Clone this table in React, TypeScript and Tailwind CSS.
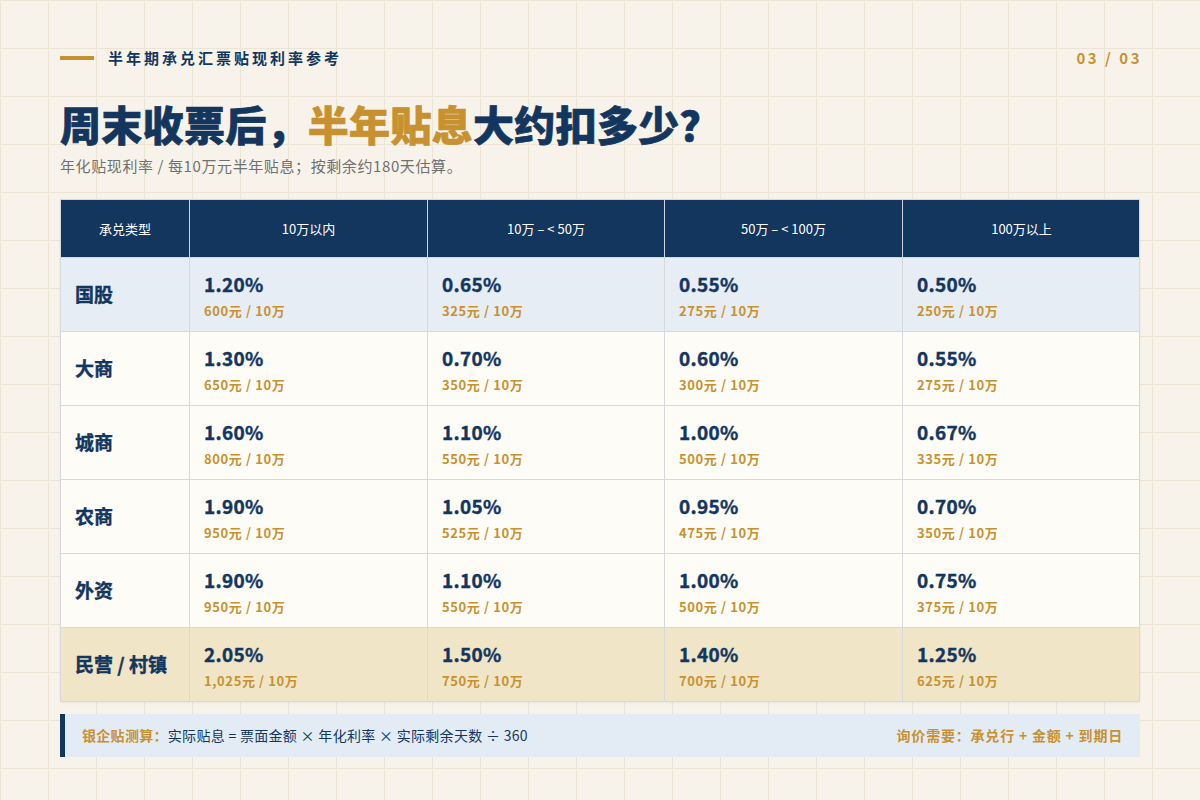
import React from 'react'

const HEADERS = ['10万 以内', '10万 – < 50万', '50万 – < 100万', '100万以上']

type Row = { name: string; tone: 'blue' | 'plain' | 'sand'; cells: [string, string][] }

const ROWS: Row[] = [
  { name: '国股', tone: 'blue', cells: [['1.20%', '600元 / 10万'], ['0.65%', '325元 / 10万'], ['0.55%', '275元 / 10万'], ['0.50%', '250元 / 10万']] },
  { name: '大商', tone: 'plain', cells: [['1.30%', '650元 / 10万'], ['0.70%', '350元 / 10万'], ['0.60%', '300元 / 10万'], ['0.55%', '275元 / 10万']] },
  { name: '城商', tone: 'plain', cells: [['1.60%', '800元 / 10万'], ['1.10%', '550元 / 10万'], ['1.00%', '500元 / 10万'], ['0.67%', '335元 / 10万']] },
  { name: '农商', tone: 'plain', cells: [['1.90%', '950元 / 10万'], ['1.05%', '525元 / 10万'], ['0.95%', '475元 / 10万'], ['0.70%', '350元 / 10万']] },
  { name: '外资', tone: 'plain', cells: [['1.90%', '950元 / 10万'], ['1.10%', '550元 / 10万'], ['1.00%', '500元 / 10万'], ['0.75%', '375元 / 10万']] },
  { name: '民营 / 村镇', tone: 'sand', cells: [['2.05%', '1,025元 / 10万'], ['1.50%', '750元 / 10万'], ['1.40%', '700元 / 10万'], ['1.25%', '625元 / 10万']] },
]

const toneBg = {
  blue: 'bg-[#e6edf5]',
  plain: 'bg-[#fdfcf7]',
  sand: 'bg-[#f0e5c7]',
}

export default function App() {
  return (
    <div className="w-[1200px] h-[800px] overflow-hidden bg-[#f7f3ea] bg-[linear-gradient(to_right,#ece5d5_1px,transparent_1px),linear-gradient(to_bottom,#ece5d5_1px,transparent_1px)] bg-[size:48px_48px] px-[60px] pt-[47px] font-['Noto_Sans_CJK_SC','Noto_Sans',sans-serif] text-[#13365f]">
      {/* 顶部标签 */}
      <div className="flex items-center justify-between h-[22px]">
        <div className="flex items-center gap-[14px]">
          <span className="block w-[34px] h-[4px] bg-[#c8912f]" />
          <span className="text-[15px] font-bold tracking-[3px]">半年期承兑汇票贴现利率参考</span>
        </div>
        <span className="text-[15px] font-bold tracking-[2.5px] text-[#c8912f] -mr-[2px]">03 / 03</span>
      </div>

      <h1 className="mt-[28px] text-[41px] leading-[52px] font-black tracking-[0.3px] [-webkit-text-stroke:0.7px_currentColor]">
        周末收票后，<span className="text-[#c8912f]">半年贴息</span>大约扣多少？
      </h1>
      <p className="mt-[6px] text-[15px] leading-[22px] tracking-[0.6px] text-[#707070]">年化贴现利率 / 每10万元半年贴息；按剩余约180天估算。</p>

      {/* 表格 */}
      <div className="mt-[22px] w-[1080px] border border-[#d6d9dc] shadow-[0_1px_3px_rgba(0,0,0,0.05)]">
        <div className="grid grid-cols-[128px_238px_237px_238px_238px] h-[57px] bg-[#13365f] text-white text-[13px]">
          <div className="flex items-center justify-center">承兑类型</div>
          {HEADERS.map(h => (
            <div key={h} className="flex items-center justify-center border-l border-[#c9d2dd]">{h.replace('万 以', '万以')}</div>
          ))}
        </div>
        {ROWS.map(r => (
          <div key={r.name} className={`grid grid-cols-[128px_238px_237px_238px_238px] h-[74px] border-t border-[#d6d9dc] ${toneBg[r.tone]}`}>
            <div className="flex items-center pl-[14px] text-[19px] font-bold [-webkit-text-stroke:0.4px_currentColor]">{r.name}</div>
            {r.cells.map(([rate, cost]) => (
              <div key={rate + cost} className="flex flex-col justify-center pl-[14px] pt-[3px] border-l border-[#d6d9dc]">
                <span className="text-[19px] leading-[24px] font-bold tracking-[0.3px] [-webkit-text-stroke:0.4px_currentColor]">{rate}</span>
                <span className="mt-[6px] text-[13px] leading-[18px] font-bold tracking-[0.6px] text-[#c8912f]">{cost}</span>
              </div>
            ))}
          </div>
        ))}
      </div>

      {/* 底部公式 */}
      <div className="mt-[12px] w-[1080px] h-[43px] flex items-center justify-between bg-[#e3ecf5] border-l-[5px] border-[#13365f] pl-[17px] pr-[17px] text-[14px] tracking-[0.3px]">
        <p>
          <span className="font-bold text-[#c8912f]">银企贴测算：</span>
          <span>实际贴息 = 票面金额 × 年化利率 × 实际剩余天数 ÷ 360</span>
        </p>
        <p className="font-bold tracking-[0.8px] text-[#c8912f]">询价需要：承兑行 + 金额 + 到期日</p>
      </div>
    </div>
  )
}
